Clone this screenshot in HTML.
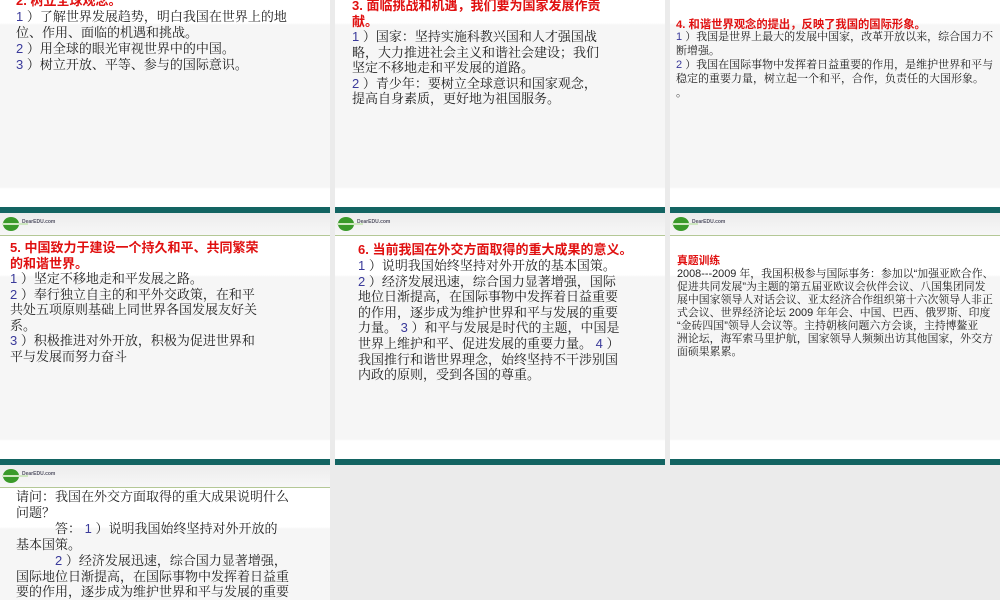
<!DOCTYPE html>
<html style="width:1000px;height:600px;overflow:hidden"><head><meta charset="utf-8"><style>
*{margin:0;padding:0;box-sizing:border-box}
body{width:1000px;height:600px;overflow:hidden;background:#ebebeb;position:relative;font-family:"Liberation Sans","Noto Serif CJK SC",serif;color:#222}
.s{position:absolute;width:330px;height:252px;background:linear-gradient(#fff 0,#fff 62px,#f6f6f6 64px,#f6f6f6 226px,#fff 228px);overflow:hidden}
.s .bar{position:absolute;left:0;top:246px;width:100%;height:6px;background:#136462}
.s .hd{position:absolute;left:0;top:0;width:100%;height:23px;background:linear-gradient(#ececec,#f7f7f7);border-bottom:1.5px solid #b4c896}
.logo{position:absolute;left:3px;top:4px;width:16px;height:14px;border-radius:50%;background:#3a9a2a}
.logo:after{content:"";position:absolute;left:-1px;top:6px;width:26px;height:2px;background:#cfe8c0}
.lt{position:absolute;left:22px;top:6px;font:bold 5px "Liberation Sans",sans-serif;color:#556}
.t{position:absolute;white-space:nowrap;font-size:13px;line-height:16px}
.r{color:#e01010;font-family:"Liberation Sans","Noto Sans CJK SC",sans-serif;font-weight:bold}
.n{color:#3a3a9a;font-family:"Liberation Sans",sans-serif}
</style></head><body>

<div class="s" style="left:0;top:-39px"><div class="bar"></div></div>
<div class="s" style="left:335px;top:-39px"><div class="bar"></div></div>
<div class="s" style="left:670px;top:-39px"><div class="bar"></div></div>

<div class="s" style="left:0;top:213px"><div class="hd"><div class="logo"></div><div class="lt">DearEDU.com</div></div><div class="bar"></div></div>
<div class="s" style="left:335px;top:213px"><div class="hd"><div class="logo"></div><div class="lt">DearEDU.com</div></div><div class="bar"></div></div>
<div class="s" style="left:670px;top:213px"><div class="hd"><div class="logo"></div><div class="lt">DearEDU.com</div></div><div class="bar"></div></div>

<div class="s" style="left:0;top:465px;height:135px;background:linear-gradient(#fff 0,#fff 62px,#f6f6f6 64px)"><div class="hd"><div class="logo"></div><div class="lt">DearEDU.com</div></div></div>

<!-- row1 col1 -->
<div class="t r" style="left:16px;top:-7px">2. 树立全球观念。</div>
<div class="t" style="left:16px;top:9px"><span class="n">1 </span>）了解世界发展趋势，明白我国在世界上的地<br>位、作用、面临的机遇和挑战。<br><span class="n">2 </span>）用全球的眼光审视世界中的中国。<br><span class="n">3 </span>）树立开放、平等、参与的国际意识。</div>

<!-- row1 col2 -->
<div class="t r" style="left:352px;top:-2px">3. 面临挑战和机遇，我们要为国家发展作贡<br>献。</div>
<div class="t" style="left:352px;top:29px;line-height:15.5px"><span class="n">1 </span>）国家：坚持实施科教兴国和人才强国战<br>略，大力推进社会主义和谐社会建设；我们<br>坚定不移地走和平发展的道路。<br><span class="n">2 </span>）青少年：要树立全球意识和国家观念，<br>提高自身素质，更好地为祖国服务。</div>

<!-- row1 col3 -->
<div class="t r" style="left:676px;top:17px;font-size:11.3px">4. 和谐世界观念的提出，反映了我国的国际形象。</div>
<div class="t" style="left:676px;top:30px;font-size:11px;line-height:14px"><span class="n">1 </span>）我国是世界上最大的发展中国家，改革开放以来，综合国力不<br>断增强。<br><span class="n">2 </span>）我国在国际事物中发挥着日益重要的作用，是维护世界和平与<br>稳定的重要力量，树立起一个和平，合作，负责任的大国形象。<br>。</div>

<!-- row2 col1 -->
<div class="t r" style="left:10px;top:240px">5. 中国致力于建设一个持久和平、共同繁荣<br>的和谐世界。</div>
<div class="t" style="left:10px;top:271px;line-height:15.6px"><span class="n">1 </span>）坚定不移地走和平发展之路。<br><span class="n">2 </span>）奉行独立自主的和平外交政策，在和平<br>共处五项原则基础上同世界各国发展友好关<br>系。<br><span class="n">3 </span>）积极推进对外开放，积极为促进世界和<br>平与发展而努力奋斗</div>

<!-- row2 col2 -->
<div class="t r" style="left:358px;top:242px">6. 当前我国在外交方面取得的重大成果的意义。</div>
<div class="t" style="left:358px;top:258px;line-height:15.6px"><span class="n">1 </span>）说明我国始终坚持对外开放的基本国策。<br><span class="n">2 </span>）经济发展迅速，综合国力显著增强，国际<br>地位日渐提高，在国际事物中发挥着日益重要<br>的作用，逐步成为维护世界和平与发展的重要<br>力量。 <span class="n">3 </span>）和平与发展是时代的主题，中国是<br>世界上维护和平、促进发展的重要力量。 <span class="n">4 </span>）<br>我国推行和谐世界理念，始终坚持不干涉别国<br>内政的原则，受到各国的尊重。</div>

<!-- row2 col3 -->
<div class="t r" style="left:677px;top:255px;font-size:10.8px;line-height:13px">真题训练</div>
<div class="t" style="left:677px;top:268px;font-size:10.9px;line-height:13px">2008---2009 年，我国积极参与国际事务：参加以“加强亚欧合作、<br>促进共同发展”为主题的第五届亚欧议会伙伴会议、八国集团同发<br>展中国家领导人对话会议、亚太经济合作组织第十六次领导人非正<br>式会议、世界经济论坛 2009 年年会、中国、巴西、俄罗斯、印度<br>“金砖四国”领导人会议等。主持朝核问题六方会谈，主持博鳌亚<br>洲论坛，海军索马里护航，国家领导人频频出访其他国家，外交方<br>面硕果累累。</div>

<!-- row3 col1 -->
<div class="t" style="left:16px;top:489px;line-height:15.9px">请问：我国在外交方面取得的重大成果说明什么<br>问题？<br>　　　答： <span class="n">1 </span>）说明我国始终坚持对外开放的<br>基本国策。<br>　　　<span class="n">2 </span>）经济发展迅速，综合国力显著增强，<br>国际地位日渐提高，在国际事物中发挥着日益重<br>要的作用，逐步成为维护世界和平与发展的重要</div>
</body></html>
